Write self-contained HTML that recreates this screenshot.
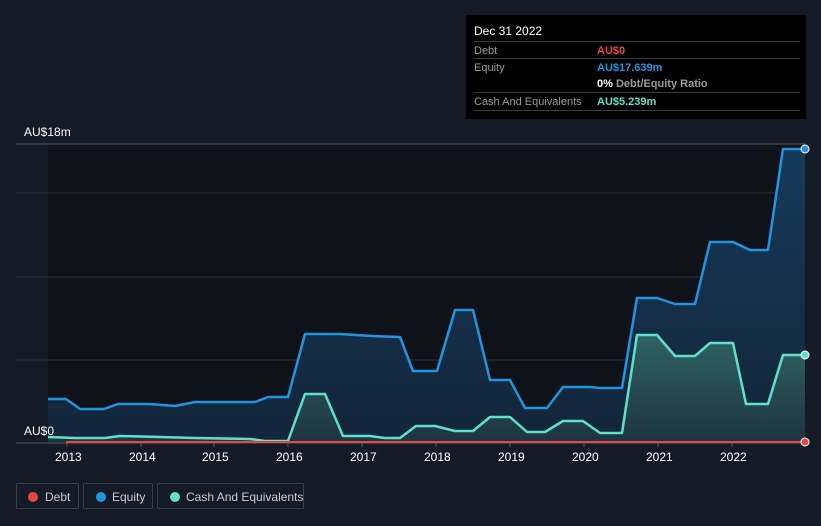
<!DOCTYPE html>
<html><head><meta charset="utf-8"><style>
body{margin:0;width:821px;height:526px;background:#151b26;font-family:"Liberation Sans",sans-serif;overflow:hidden;position:relative}
.tt{position:absolute;left:466px;top:15px;width:340px;height:104px;background:#000;color:#fff;font-size:11px}
.row{position:absolute;left:8px;width:326px;border-top:1px solid #3a3a3a;height:17px}
.l{position:absolute;left:0;top:3px;color:#9a9a9a}
.v{position:absolute;left:123px;top:3px;font-weight:bold;white-space:nowrap}
.leg{position:absolute;top:483px;height:26px;border:1px solid #3a404b;border-radius:2px;color:#c8ccd2;font-size:12px;box-sizing:border-box;white-space:nowrap}
.leg span{position:absolute;top:6px}
.dot{position:absolute;top:8px;width:10px;height:10px;border-radius:50%}
.ax{position:absolute;color:#fff;font-size:12px}
</style></head><body>
<svg width="821" height="526" style="position:absolute;left:0;top:0">
<defs>
<linearGradient id="ge" x1="0" y1="0" x2="0" y2="1"><stop offset="0" stop-color="#153a5a"/><stop offset="1" stop-color="#13253a"/></linearGradient>
<linearGradient id="gc" x1="0" y1="0" x2="0" y2="1"><stop offset="0" stop-color="#2f6363"/><stop offset="1" stop-color="#1d3440"/></linearGradient>
</defs>
<rect x="48" y="144" width="757" height="298" fill="#0f1319"/>
<g stroke="#2a2f37" stroke-width="1">
<line x1="16" y1="144" x2="805" y2="144" stroke="#555a61"/>
<line x1="16" y1="193" x2="805" y2="193"/>
<line x1="16" y1="277" x2="805" y2="277"/>
<line x1="16" y1="360" x2="805" y2="360"/>
<line x1="16" y1="443" x2="805" y2="443" stroke="#555a61"/>
</g>
<polygon fill="url(#ge)" points="48,442 48,399 66,399 80,409 104,409 118,404 150,404 175,406 195,402 255,402 268,397 288,397 305,334 340,334 372,336 400,337 413,371 437,371 455,310 473,310 490,380 510,380 525,408 547,408 563,387 590,387 600,388 622,388 637,298 657,298 675,304 695,304 710,242 733,242 750,250 768,250 783,149 805,149 805,442"/>
<polygon fill="url(#gc)" points="48,442 48,437 75,438 105,438 120,436 160,437 195,438 250,439 265,441 288,441 305,394 325,394 343,436 370,436 385,438 400,438 416,426 435,426 455,431 473,431 490,417 510,417 527,432 545,432 563,421 583,421 600,433 622,433 637,335 657,335 675,356 695,356 710,343 733,343 746,404 768,404 783,355 805,355 805,442"/>
<polyline fill="none" stroke="#2394df" stroke-width="2.5" stroke-linejoin="round" points="48,399 66,399 80,409 104,409 118,404 150,404 175,406 195,402 255,402 268,397 288,397 305,334 340,334 372,336 400,337 413,371 437,371 455,310 473,310 490,380 510,380 525,408 547,408 563,387 590,387 600,388 622,388 637,298 657,298 675,304 695,304 710,242 733,242 750,250 768,250 783,149 805,149"/>
<polyline fill="none" stroke="#5fe0c8" stroke-width="2.5" stroke-linejoin="round" points="48,437 75,438 105,438 120,436 160,437 195,438 250,439 265,441 288,441 305,394 325,394 343,436 370,436 385,438 400,438 416,426 435,426 455,431 473,431 490,417 510,417 527,432 545,432 563,421 583,421 600,433 622,433 637,335 657,335 675,356 695,356 710,343 733,343 746,404 768,404 783,355 805,355"/>
<line x1="66" y1="442" x2="805" y2="442" stroke="#e84545" stroke-width="2"/>
<circle cx="805" cy="149" r="4" fill="#2394df" stroke="#fff" stroke-width="1"/>
<circle cx="805" cy="355" r="4" fill="#5fe0c8" stroke="#fff" stroke-width="1"/>
<circle cx="805" cy="442" r="4" fill="#e84545" stroke="#fff" stroke-width="1"/>
<g stroke="#555a61"><line x1="67" y1="443" x2="67" y2="447"/><line x1="141" y1="443" x2="141" y2="447"/><line x1="214" y1="443" x2="214" y2="447"/><line x1="288" y1="443" x2="288" y2="447"/><line x1="362" y1="443" x2="362" y2="447"/><line x1="436" y1="443" x2="436" y2="447"/><line x1="510" y1="443" x2="510" y2="447"/><line x1="584" y1="443" x2="584" y2="447"/><line x1="658" y1="443" x2="658" y2="447"/><line x1="732" y1="443" x2="732" y2="447"/></g>
</svg>
<div class="ax" style="left:24px;top:125px">AU$18m</div>
<div class="ax" style="left:24px;top:424px">AU$0</div>
<div class="ax" style="left:55px;top:450px">2013</div>
<div class="ax" style="left:129px;top:450px">2014</div>
<div class="ax" style="left:202px;top:450px">2015</div>
<div class="ax" style="left:276px;top:450px">2016</div>
<div class="ax" style="left:350px;top:450px">2017</div>
<div class="ax" style="left:424px;top:450px">2018</div>
<div class="ax" style="left:498px;top:450px">2019</div>
<div class="ax" style="left:572px;top:450px">2020</div>
<div class="ax" style="left:646px;top:450px">2021</div>
<div class="ax" style="left:720px;top:450px">2022</div>
<div class="tt">
<div style="position:absolute;left:8px;top:9px;font-size:12px">Dec 31 2022</div>
<div class="row" style="top:26px"><span class="l">Debt</span><span class="v" style="color:#e84545">AU$0</span></div>
<div class="row" style="top:43px"><span class="l">Equity</span><span class="v" style="color:#2394df">AU$17.639m</span></div>
<div class="row" style="top:60px;border-top:none"><span class="v" style="color:#fff">0% <span style="color:#9a9a9a;font-weight:bold">Debt/Equity Ratio</span></span></div>
<div class="row" style="top:77px;border-bottom:1px solid #3a3a3a"><span class="l">Cash And Equivalents</span><span class="v" style="color:#5fe0c8">AU$5.239m</span></div>
</div>
<div class="leg" style="left:16px;width:63px"><div class="dot" style="left:11px;background:#e84545"></div><span style="left:28px">Debt</span></div>
<div class="leg" style="left:83px;width:70px"><div class="dot" style="left:12px;background:#2394df"></div><span style="left:28px">Equity</span></div>
<div class="leg" style="left:157px;width:147px"><div class="dot" style="left:12px;background:#5fe0c8"></div><span style="left:28px">Cash And Equivalents</span></div>
</body></html>
